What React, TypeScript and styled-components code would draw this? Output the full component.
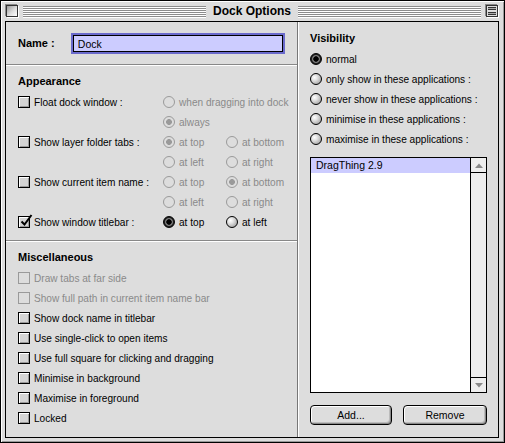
import React from 'react';
import styled, { createGlobalStyle } from 'styled-components';

const sans = '"Liberation Sans", Arial, sans-serif';

const GlobalStyle = createGlobalStyle`
  html, body {
    margin: 0;
    padding: 0;
    background: #dddddd;
  }
  * {
    box-sizing: border-box;
  }
`;

const Window = styled.div`
  width: 505px;
  height: 443px;
  border: 1px solid #000;
  background: #dddddd;
  box-shadow: inset 1px 1px #fff, inset -1px -1px #999;
  display: flex;
  flex-direction: column;
  padding: 0 5px 4px 4px;
  font-family: ${sans};
`;

const TitleBar = styled.div`
  height: 20px;
  display: flex;
  align-items: center;
  gap: 4px;
`;

const WidgetBox = styled.div`
  width: 12px;
  height: 12px;
  flex: none;
  border: 1px solid #333;
  background: linear-gradient(135deg, #999 0%, #ddd 55%, #fff 100%);
  box-shadow: 1px 1px #fff, -1px -1px #888;
  margin: 0 1px;
`;

const ShadeBox = styled(WidgetBox)`
  background: #ddd;
  display: flex;
  flex-direction: column;
  justify-content: center;
  gap: 2px;
  padding: 0 1px;
`;

const ShadeBar = styled.span`
  display: block;
  height: 3px;
  border-top: 1px solid #333;
  border-bottom: 1px solid #333;
  background: #aaa;
`;

const Stripes = styled.div`
  flex: 1;
  height: 12px;
  margin-top: 1px;
  background: repeating-linear-gradient(
    to bottom,
    #8c8c8c 0 1px,
    #ffffff 1px 2px
  );
`;

const Title = styled.div`
  font-weight: bold;
  font-size: 12px;
  color: #000;
  padding: 0 3px;
  line-height: 16px;
`;

const Content = styled.div`
  flex: 1;
  border: 1px solid #000;
  display: flex;
  background: #dddddd;
`;

const LeftPanel = styled.div`
  width: 292px;
  border-right: 1px solid #777;
  display: flex;
  flex-direction: column;
`;

const RightPanel = styled.div`
  flex: 1;
  border-left: 1px solid #fff;
  padding: 8px 11px 12px 11px;
  display: flex;
  flex-direction: column;
`;

const Section = styled.div<{ $last?: boolean }>`
  padding: 7px 12px 0 12px;
  border-bottom: ${p => (p.$last ? 'none' : '1px solid #888')};
  box-shadow: ${p => (p.$last ? 'none' : '0 1px #fff')};
  margin-bottom: ${p => (p.$last ? '0' : '1px')};
`;

const NameRow = styled.div`
  height: 42px;
  display: flex;
  align-items: center;
  margin-top: -7px;
`;

const NameLabel = styled.span`
  width: 53px;
  font-weight: bold;
  font-size: 11px;
  color: #000;
`;

const NameInput = styled.input`
  width: 215px;
  height: 21px;
  border: 2px solid #6a6acc;
  box-shadow: inset 0 0 0 1px #000;
  background: #ccccff;
  font-family: ${sans};
  font-size: 10.5px;
  color: #000;
  padding: 1px 5px 0 5px;
  outline: none;
`;

const Heading = styled.div`
  font-weight: bold;
  font-size: 11px;
  line-height: 16px;
  color: #000;
  margin-bottom: 3px;
`;

const OptionGrid = styled.div`
  display: grid;
  grid-template-columns: 145px 63px 1fr;
  grid-auto-rows: 20px;
  align-items: center;
  padding-bottom: 8px;
`;

const OptionList = styled.div`
  display: flex;
  flex-direction: column;
`;

const Option = styled.label<{ $disabled?: boolean; $span?: boolean }>`
  display: flex;
  align-items: center;
  gap: 4px;
  height: 20px;
  font-size: 10.1px;
  white-space: nowrap;
  color: ${p => (p.$disabled ? '#8a8a8a' : '#000')};
  grid-column: ${p => (p.$span ? 'span 2' : 'auto')};
`;

const OptionText = styled.span`
  padding-top: 1px;
`;

const Box = styled.span<{ $disabled?: boolean }>`
  position: relative;
  width: 12px;
  height: 12px;
  flex: none;
  border: 1px solid ${p => (p.$disabled ? '#9a9a9a' : '#000')};
  background: ${p => (p.$disabled ? '#dddddd' : '#d4d4d4')};
  box-shadow: ${p =>
    p.$disabled ? 'none' : 'inset 1px 1px #fff, inset -1px -1px #999'};
`;

const Tick = styled.svg`
  position: absolute;
  left: 1px;
  top: -3px;
  width: 13px;
  height: 13px;
  overflow: visible;
`;

const Dot = styled.span<{ $on?: boolean; $disabled?: boolean }>`
  width: 12px;
  height: 12px;
  flex: none;
  border-radius: 50%;
  border: 1px solid ${p => (p.$disabled ? '#9a9a9a' : '#000')};
  background: ${p => {
    if (p.$disabled) {
      return p.$on
        ? 'radial-gradient(circle, #9a9a9a 0 2.6px, transparent 3.2px)'
        : 'transparent';
    }
    return p.$on
      ? 'radial-gradient(circle, #000 0 2.4px, #777 3px 3.6px, #222 4.4px)'
      : 'radial-gradient(circle at 35% 35%, #fff 0, #e4e4e4 30%, #9a9a9a 90%)';
  }};
`;

const CheckOption: React.FC<{ label: string; checked?: boolean; disabled?: boolean }> = ({
  label,
  checked,
  disabled,
}) => (
  <Option $disabled={disabled}>
    <Box $disabled={disabled}>
      {checked && (
        <Tick viewBox="0 0 13 13">
          <path d="M1.5 7.5 L4.5 10.5 L11.5 1" stroke="#000" strokeWidth="2" fill="none" />
        </Tick>
      )}
    </Box>
    <OptionText>{label}</OptionText>
  </Option>
);

const RadioOption: React.FC<{
  label: string;
  on?: boolean;
  disabled?: boolean;
  span?: boolean;
}> = ({ label, on, disabled, span }) => (
  <Option $disabled={disabled} $span={span}>
    <Dot $on={on} $disabled={disabled} />
    <OptionText>{label}</OptionText>
  </Option>
);

const Blank = styled.span``;

const ListBox = styled.div`
  margin-top: 8px;
  height: 236px;
  border: 1px solid #000;
  background: #fff;
  display: flex;
`;

const ListItems = styled.div`
  flex: 1;
`;

const ListRow = styled.div<{ $selected?: boolean }>`
  height: 15px;
  line-height: 15px;
  padding-left: 5px;
  font-size: 10.5px;
  color: #000;
  background: ${p => (p.$selected ? '#ccccff' : 'transparent')};
`;

const ScrollBar = styled.div`
  width: 16px;
  border-left: 1px solid #000;
  background: #eeeeee;
  display: flex;
  flex-direction: column;
  justify-content: space-between;
`;

const ScrollArrow = styled.div<{ $down?: boolean }>`
  height: 15px;
  display: flex;
  align-items: center;
  justify-content: center;
  border-bottom: ${p => (p.$down ? 'none' : '1px solid #000')};
  border-top: ${p => (p.$down ? '1px solid #000' : 'none')};
`;

const Buttons = styled.div`
  margin-top: 12px;
  display: flex;
  justify-content: space-between;
`;

const PushButton = styled.button<{ $w: number }>`
  width: ${p => p.$w}px;
  height: 20px;
  border: 1px solid #000;
  border-radius: 4px;
  background: #dddddd;
  box-shadow: inset 1px 1px #fff, inset -1px -1px #888, inset -2px -2px #bbb;
  font-family: ${sans};
  font-size: 10.5px;
  color: #000;
  padding: 0;
`;

const Arrow: React.FC<{ down?: boolean }> = ({ down }) => (
  <svg width="8" height="5" viewBox="0 0 8 5">
    <path d={down ? 'M0 0 H8 L4 4.5 Z' : 'M0 5 H8 L4 0.5 Z'} fill="#8a8a8a" />
  </svg>
);

const App: React.FC = () => {
  return (
    <>
      <GlobalStyle />
      <Window>
        <TitleBar>
          <WidgetBox />
          <Stripes />
          <Title>Dock Options</Title>
          <Stripes />
          <ShadeBox>
            <ShadeBar />
            <ShadeBar />
          </ShadeBox>
        </TitleBar>
        <Content>
          <LeftPanel>
            <Section>
              <NameRow>
                <NameLabel>Name :</NameLabel>
                <NameInput value="Dock" readOnly />
              </NameRow>
            </Section>
            <Section>
              <Heading>Appearance</Heading>
              <OptionGrid>
                <CheckOption label="Float dock window :" />
                <RadioOption label="when dragging into dock" disabled span />
                <Blank />
                <RadioOption label="always" on disabled span />
                <CheckOption label="Show layer folder tabs :" />
                <RadioOption label="at top" on disabled />
                <RadioOption label="at bottom" disabled />
                <Blank />
                <RadioOption label="at left" disabled />
                <RadioOption label="at right" disabled />
                <CheckOption label="Show current item name :" />
                <RadioOption label="at top" disabled />
                <RadioOption label="at bottom" on disabled />
                <Blank />
                <RadioOption label="at left" disabled />
                <RadioOption label="at right" disabled />
                <CheckOption label="Show window titlebar :" checked />
                <RadioOption label="at top" on />
                <RadioOption label="at left" />
              </OptionGrid>
            </Section>
            <Section $last>
              <Heading>Miscellaneous</Heading>
              <OptionList>
                <CheckOption label="Draw tabs at far side" disabled />
                <CheckOption label="Show full path in current item name bar" disabled />
                <CheckOption label="Show dock name in titlebar" />
                <CheckOption label="Use single-click to open items" />
                <CheckOption label="Use full square for clicking and dragging" />
                <CheckOption label="Minimise in background" />
                <CheckOption label="Maximise in foreground" />
                <CheckOption label="Locked" />
              </OptionList>
            </Section>
          </LeftPanel>
          <RightPanel>
            <Heading>Visibility</Heading>
            <OptionList>
              <RadioOption label="normal" on />
              <RadioOption label="only show in these applications :" />
              <RadioOption label="never show in these applications :" />
              <RadioOption label="minimise in these applications :" />
              <RadioOption label="maximise in these applications :" />
            </OptionList>
            <ListBox>
              <ListItems>
                <ListRow $selected>DragThing 2.9</ListRow>
              </ListItems>
              <ScrollBar>
                <ScrollArrow>
                  <Arrow />
                </ScrollArrow>
                <ScrollArrow $down>
                  <Arrow down />
                </ScrollArrow>
              </ScrollBar>
            </ListBox>
            <Buttons>
              <PushButton $w={82}>Add...</PushButton>
              <PushButton $w={84}>Remove</PushButton>
            </Buttons>
          </RightPanel>
        </Content>
      </Window>
    </>
  );
};

export default App;
